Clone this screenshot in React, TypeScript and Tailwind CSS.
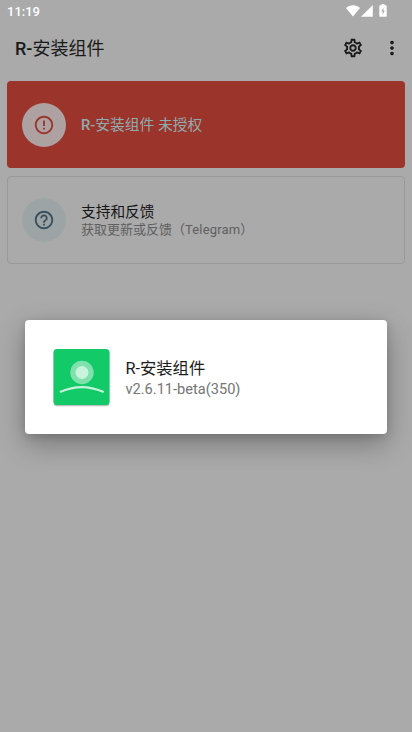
import React from 'react';
import { MdErrorOutline, MdHelpOutline, MdMoreVert, MdOutlineSettings } from 'react-icons/md';

const StatusBar = () => (
    <div className="flex h-[22px] items-center justify-between pl-[7px] pr-[25px] text-white">
        <span className="text-[13px] leading-[22px] font-medium pt-[2px]">11:19</span>
        <div className="flex items-center">
            <svg className="h-[12px] w-[14px]" viewBox="0 0 14 12" fill="currentColor">
                <path d="M0 3C4 -.6 10 -.6 14 3L7 11.5Z" />
            </svg>
            <svg className="ml-[1px] h-[12px] w-[12px]" viewBox="0 0 12 12" fill="currentColor">
                <path d="M11.8 0V11.7H0Z" />
            </svg>
            <svg className="mb-px ml-[6px] h-[13px] w-[8px]" viewBox="0 0 8 13" fill="currentColor">
                <path d="M2.5 0h3v1.3H7a.7.7 0 0 1 .7.7v10a.7.7 0 0 1-.7.7H1a.7.7 0 0 1-.7-.7V2a.7.7 0 0 1 .7-.7h1.5z" />
                <path d="M4.5 3.9L2.2 7.4h1.5v3l2.1-3.7H4.5z" fill="#aaaaaa" />
            </svg>
        </div>
    </div>
);

const AppBar = () => (
    <div className="flex h-[52px] items-center justify-between pl-[15px] pr-[9px] text-[#1a1a1a]">
        <h1 className="pt-[2px] text-[18px] leading-6 font-medium">
            R-<span className="font-normal">安装组件</span>
        </h1>
        <div className="flex items-center gap-[17px]">
            <MdOutlineSettings className="size-[22px]" />
            <MdMoreVert className="size-[22px]" />
        </div>
    </div>
);

const AppLogo = () => (
    <svg className="mt-[2px] h-[60px] w-[58px] shrink-0" viewBox="0 0 58 60">
        <rect x="1.5" y="2.2" width="56" height="56" rx="3.5" fill="#000" opacity=".25" />
        <rect x="1.5" y="1" width="56" height="56" rx="3.5" fill="#12ca68" />
        <circle cx="30" cy="24.5" r="11.7" fill="#7fe2ac" />
        <circle cx="30" cy="24.5" r="6.5" fill="#c9f3dc" />
        <path d="M8.7 43.7Q29.5 34.5 51 43.7" fill="none" stroke="#c5f2da" strokeWidth="2.1" strokeLinecap="round" />
    </svg>
);

export default function App() {
    return (
        <div
            className="relative h-[732px] w-full overflow-hidden bg-[#aaaaaa]"
            style={{ fontFamily: 'Roboto, "Noto Sans CJK SC", sans-serif' }}
        >
            <StatusBar />
            <AppBar />

            <main className="flex flex-col gap-2 px-[7px] pt-[7px]">
                {/* License status */}
                <div className="flex h-[87px] items-center rounded-[4px] bg-[#9b342b] pl-[15px]">
                    <div className="flex size-11 items-center justify-center rounded-full bg-[#aea1a2]">
                        <MdErrorOutline className="size-[22px] text-[#9b342b]" />
                    </div>
                    <p className="ml-[15px] text-[14.75px] leading-5 font-medium text-[#8fadb1]">
                        R-<span className="font-normal">安装组件 未授权</span>
                    </p>
                </div>

                {/* Support */}
                <div className="flex h-[88px] items-center rounded-[4px] border border-[#999999] pl-[14px]">
                    <div className="flex size-11 items-center justify-center rounded-full bg-[#9da4a6]">
                        <MdHelpOutline className="size-[22px] text-[#35505a]" />
                    </div>
                    <div className="ml-[15px] pt-[2px]">
                        <p className="text-[14.7px] leading-[18px] text-[#161616]">支持和反馈</p>
                        <p className="text-[13px] leading-[18px] text-[#5f5f5f]">
                            获取更新或反馈（<span className="tracking-[0.15px]">Telegram</span>）
                        </p>
                    </div>
                </div>
            </main>

            {/* About dialog */}
            <div className="absolute inset-x-[25px] top-[320px] flex h-[114px] items-center rounded-[4px] bg-white pl-[27px] shadow-[0_10px_28px_rgba(0,0,0,0.3),0_2px_8px_rgba(0,0,0,0.12)]">
                <AppLogo />
                <div className="ml-[15.5px] pt-px">
                    <p className="text-[16.3px] leading-[22px] text-[#1c1c1c]">R-安装组件</p>
                    <p className="text-[14.6px] leading-[18px] text-[#757575]">v2.6.11-beta(350)</p>
                </div>
            </div>
        </div>
    );
}
